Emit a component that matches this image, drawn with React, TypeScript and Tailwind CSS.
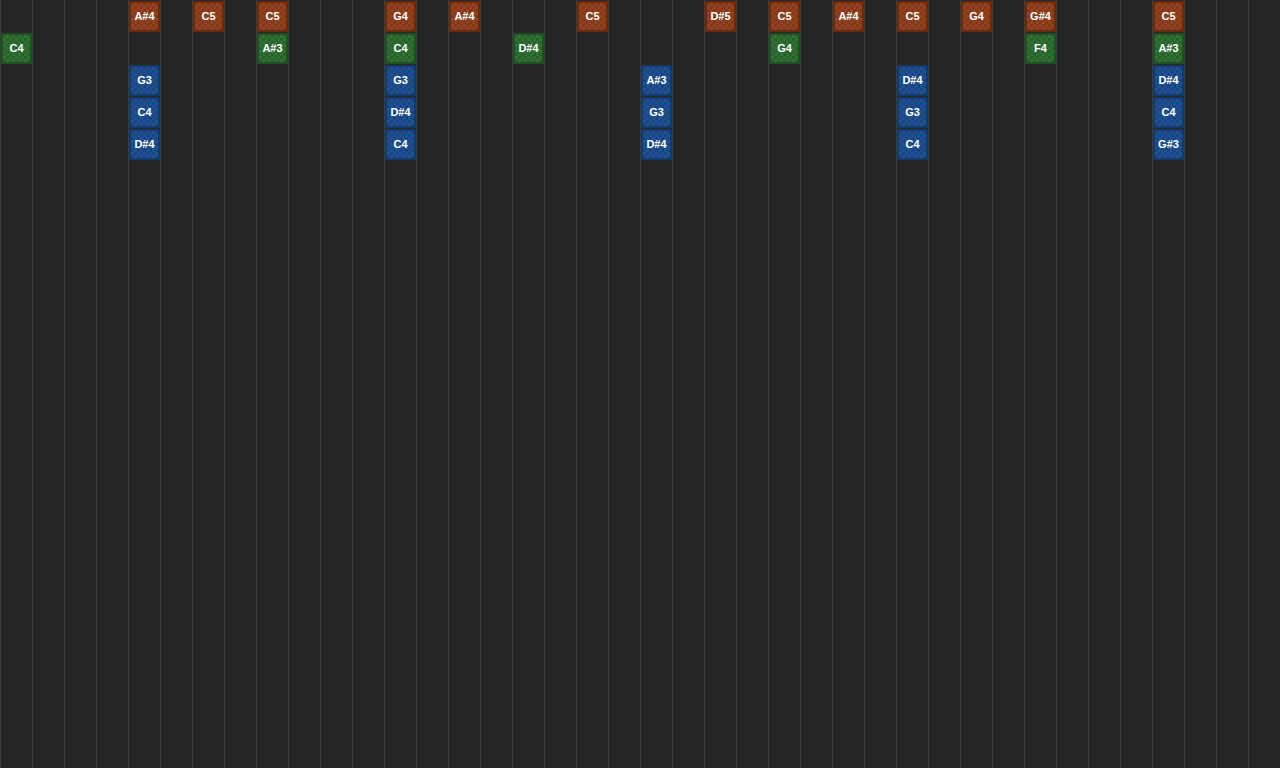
import React from "react";

type N = [string, "o" | "g" | "b"] | null;
const data: Record<number, N[]> = {
  0: [null, ["C4", "g"]],
  4: [["A#4", "o"], null, ["G3", "b"], ["C4", "b"], ["D#4", "b"]],
  6: [["C5", "o"]],
  8: [["C5", "o"], ["A#3", "g"]],
  12: [["G4", "o"], ["C4", "g"], ["G3", "b"], ["D#4", "b"], ["C4", "b"]],
  14: [["A#4", "o"]],
  16: [null, ["D#4", "g"]],
  18: [["C5", "o"]],
  20: [null, null, ["A#3", "b"], ["G3", "b"], ["D#4", "b"]],
  22: [["D#5", "o"]],
  24: [["C5", "o"], ["G4", "g"]],
  26: [["A#4", "o"]],
  28: [["C5", "o"], null, ["D#4", "b"], ["G3", "b"], ["C4", "b"]],
  30: [["G4", "o"]],
  32: [["G#4", "o"], ["F4", "g"]],
  36: [["C5", "o"], ["A#3", "g"], ["D#4", "b"], ["C4", "b"], ["G#3", "b"]],
};

const cls = {
  o: "bg-[#8b3d1c] border-[#6a2a10] bg-[repeating-conic-gradient(#94431f_0%_25%,#843817_0%_50%)] bg-[length:6px_6px]",
  g: "bg-[#2b6a30] border-[#1f4f23] bg-[repeating-conic-gradient(#2f7234_0%_25%,#28632c_0%_50%)] bg-[length:6px_6px]",
  b: "bg-[#1b4c8a] border-[#143a6a] bg-[repeating-conic-gradient(#1e5294_0%_25%,#194682_0%_50%)] bg-[length:6px_6px]",
};

export default function App() {
  return (
    <div className="w-[1280px] h-[768px] bg-[#262628] flex overflow-hidden" style={{ fontFamily: "'Liberation Sans', Arial, sans-serif" }}>
      {Array.from({ length: 40 }).map((_, i) => (
        <div key={i} className="w-[32px] h-full shrink-0 border-l border-[#3c3c3e] flex flex-col">
          {(data[i] || []).map((n, j) => (
            <div key={j} className="h-[32px] pt-px pr-px">
              {n && (
                <div className={`w-[31px] h-[31px] border-2 flex items-center justify-center text-white text-[11px] font-bold ${cls[n[1]]}`}>
                  {n[0]}
                </div>
              )}
            </div>
          ))}
        </div>
      ))}
    </div>
  );
}
